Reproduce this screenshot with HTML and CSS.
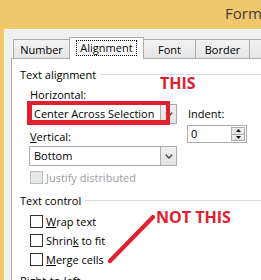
FILE: index.html
```html
<!DOCTYPE html>
<html>
<head>
<meta charset="utf-8">
<link rel="stylesheet" href="styles.css">
</head>
<body>
<div class="window">
  <div class="titlebar">Format Cells</div>
  <div class="dialog">
    <div class="tabs">
      <div class="tab tab-number">Number</div>
      <div class="tab tab-align tab-active"><span class="focus">Alignment</span></div>
      <div class="tab tab-font">Font</div>
      <div class="tab tab-border">Border</div>
      <div class="tab tab-fill">Fill</div>
    </div>
    <div class="panel">
      <div class="group-head"><span>Text alignment</span><span class="rule"></span></div>
      <div class="align-row">
        <div class="col-left">
          <div class="label">Horizontal:</div>
          <div class="combo">
            <span class="combo-text">Center Across Selection</span>
            <span class="combo-btn"><svg width="8" height="5" viewBox="0 0 8 5"><polyline points="0.8,0.8 4,4 7.2,0.8" fill="none" stroke="#444" stroke-width="1.3"/></svg></span>
          </div>
          <div class="label label-gap"><u>V</u>ertical:</div>
          <div class="combo">
            <span class="combo-text">Bottom</span>
            <span class="combo-btn"><svg width="8" height="5" viewBox="0 0 8 5"><polyline points="0.8,0.8 4,4 7.2,0.8" fill="none" stroke="#444" stroke-width="1.3"/></svg></span>
          </div>
          <div class="check check-justify disabled"><span class="box"></span><span>Justify distributed</span></div>
        </div>
        <div class="col-right">
          <div class="label">Indent:</div>
          <div class="spin">
            <span class="spin-val">0</span>
            <span class="spin-btns">
              <span class="sb"><svg width="5" height="3" viewBox="0 0 5 3"><polygon points="0,3 2.5,0 5,3" fill="#111"/></svg></span>
              <span class="sb"><svg width="5" height="3" viewBox="0 0 5 3"><polygon points="0,0 5,0 2.5,3" fill="#111"/></svg></span>
            </span>
          </div>
        </div>
      </div>
      <div class="group-head group-gap"><span>Text control</span><span class="rule"></span></div>
      <div class="checks">
        <div class="check"><span class="box"></span><span><u>W</u>rap text</span></div>
        <div class="check"><span class="box"></span><span>Shrin<u>k</u> to fit</span></div>
        <div class="check"><span class="box"></span><span><u>M</u>erge cells</span></div>
      </div>
      <div class="group-head group-gap2"><span>Right-to-left</span><span class="rule"></span></div>
    </div>
  </div>
</div>
<div class="red-box"></div>
<div class="note note-this">THIS</div>
<div class="note note-not">NOT THIS</div>
<svg class="stroke" width="65" height="65" viewBox="0 0 65 65"><line x1="10" y1="56" x2="53" y2="12" stroke="#e0202e" stroke-width="4.2" stroke-linecap="round"/></svg>
</body>
</html>
```

FILE: styles.css
```css
body {
  margin: 0;
  width: 261px;
  height: 280px;
  overflow: hidden;
  position: relative;
  background: #f1c76c;
  font-family: "Open Sans", "Noto Sans", sans-serif;
  font-size: 11px;
  line-height: 15px;
  color: #000;
}

.window {
  width: 330px;
}

.titlebar {
  height: 29px;
  padding-left: 225px;
  font-size: 15px;
  line-height: 27px;
  color: #3c3c3c;
  white-space: nowrap;
}

.dialog {
  margin-left: 4px;
  border-left: 1px solid #f8f8f8;
  border-top: 1px solid #f8f8f8;
  background: #f0f0f0;
  padding-left: 6px;
  height: 260px;
}

.tabs {
  display: flex;
  align-items: flex-end;
  height: 21px;
  padding-top: 7px;
  padding-left: 2px;
}

.tab {
  box-sizing: border-box;
  height: 19px;
  border: 1px solid #acacac;
  border-bottom: 0;
  background: linear-gradient(#f2f2f2, #e6e6e6);
  text-align: center;
  padding-top: 2px;
  margin-left: -1px;
  white-space: nowrap;
}

.tab-number { margin-left: 0; width: 57px; }
.tab-align { width: 75px; }
.tab-font { width: 53px; }
.tab-border { width: 55px; }
.tab-fill { width: 60px; }

.tab-active {
  height: 22px;
  margin-bottom: -1px;
  background: #fff;
  position: relative;
  z-index: 1;
}

.focus {
  display: inline-block;
  border: 1px dotted #000;
  padding: 0 3px;
  line-height: 14px;
}

.panel {
  border-top: 1px solid #acacac;
  border-left: 1px solid #acacac;
  background: #fff;
  padding: 8px 0 0 8px;
  height: 240px;
}

.group-head {
  display: flex;
  align-items: center;
  gap: 4px;
  white-space: nowrap;
}

.rule {
  flex: 1;
  height: 1px;
  background: #dcdcdc;
}

.group-gap { margin-top: 8px; }
.group-gap2 { margin-top: 6px; }

.align-row {
  display: flex;
  align-items: flex-start;
  padding-left: 9px;
  margin-top: 5px;
}

.col-left { width: 148px; }

.label { padding-left: 1px; }
.label-gap { margin-top: 5px; }

.combo {
  margin-top: 2px;
  height: 20px;
  box-sizing: border-box;
  border: 1px solid #acacac;
  background: #fff;
  display: flex;
}

.combo-text {
  flex: 1;
  padding-left: 4px;
  line-height: 18px;
  white-space: nowrap;
  overflow: hidden;
}

.combo-btn {
  width: 15px;
  border-left: 1px solid #acacac;
  background: linear-gradient(#f0f0f0, #e3e3e3);
  display: flex;
  align-items: center;
  justify-content: center;
}

.check {
  display: flex;
  align-items: center;
  gap: 3px;
  height: 15px;
  padding-left: 1px;
  white-space: nowrap;
}

.check-justify { margin-top: 4px; }

.box {
  width: 13px;
  height: 13px;
  box-sizing: border-box;
  border: 1px solid #333;
  background: #fff;
}

.disabled { color: #9d9d9d; }
.disabled .box {
  border-color: #bcbcbc;
  background: #e6e6e6;
}

.col-right {
  margin-left: 10px;
  padding-top: 19px;
}

.spin {
  margin-top: 4px;
  width: 60px;
  height: 18px;
  box-sizing: border-box;
  border: 1px solid #acacac;
  background: #fff;
  display: flex;
}

.spin-val {
  flex: 1;
  padding-left: 3px;
  line-height: 16px;
}

.spin-btns {
  width: 14px;
  margin: 1px;
  display: flex;
  flex-direction: column;
}

.sb {
  flex: 1;
  border: 1px solid #adadad;
  background: linear-gradient(#f2f2f2, #e2e2e2);
  display: flex;
  align-items: center;
  justify-content: center;
}

.sb + .sb { border-top: 0; }

.checks {
  margin-top: 6px;
  padding-left: 9px;
  display: flex;
  flex-direction: column;
  gap: 4px;
}

.red-box {
  position: absolute;
  left: 27px;
  top: 101px;
  width: 143px;
  height: 24px;
  box-sizing: border-box;
  border-style: solid;
  border-color: #e0202e;
  border-width: 4px 4px 5px 5px;
}

.note {
  position: absolute;
  font-family: "Open Sans", sans-serif;
  font-weight: 700;
  font-size: 16px;
  line-height: 16px;
  color: #e0202e;
  white-space: nowrap;
}

.note-this { left: 160px; top: 75px; }
.note-not { left: 156px; top: 209px; }

.stroke {
  position: absolute;
  left: 100px;
  top: 205px;
}
```
